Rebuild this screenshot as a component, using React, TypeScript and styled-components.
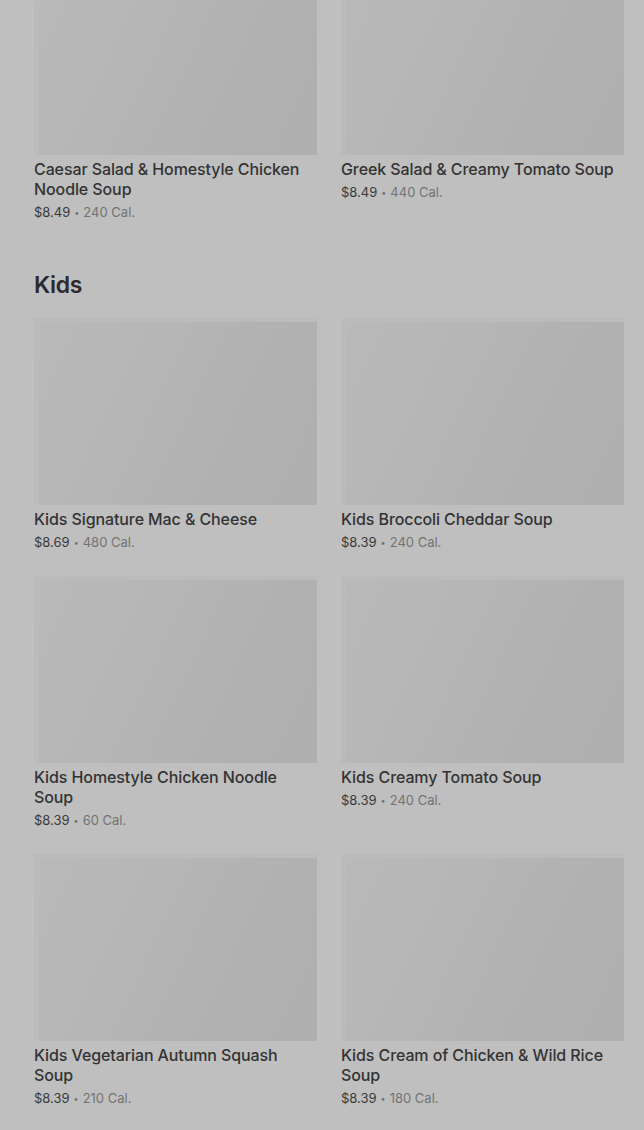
import React from "react";
import { styled, createGlobalStyle } from "styled-components";

type Item = { name: string; price: string; cal: string };

const salads: Item[] = [
  { name: "Caesar Salad & Homestyle Chicken Noodle Soup", price: "$8.49", cal: "240 Cal." },
  { name: "Greek Salad & Creamy Tomato Soup", price: "$8.49", cal: "440 Cal." },
];

const kids: Item[] = [
  { name: "Kids Signature Mac & Cheese", price: "$8.69", cal: "480 Cal." },
  { name: "Kids Broccoli Cheddar Soup", price: "$8.39", cal: "240 Cal." },
  { name: "Kids Homestyle Chicken Noodle Soup", price: "$8.39", cal: "60 Cal." },
  { name: "Kids Creamy Tomato Soup", price: "$8.39", cal: "240 Cal." },
  { name: "Kids Vegetarian Autumn Squash Soup", price: "$8.39", cal: "210 Cal." },
  { name: "Kids Cream of Chicken & Wild Rice Soup", price: "$8.39", cal: "180 Cal." },
];

const GlobalStyle = createGlobalStyle`
  html, body {
    margin: 0;
    background: #bfbfbf;
    overflow: hidden;
  }
  body {
    font-family: Inter, Roboto, "Liberation Sans", Arial, sans-serif;
    color: #2f2f2f;
  }
`;

const Page = styled.main`
  margin-top: -32px;
  padding: 0 20px 40px 34px;
`;

const Section = styled.section`
  & + & {
    margin-top: 47px;
  }
`;

const Heading = styled.h2`
  margin: 0 0 17px;
  font-size: 23px;
  line-height: 32px;
  font-weight: 600;
  color: #2b2b2b;
  letter-spacing: -0.3px;
`;

const Grid = styled.div`
  display: grid;
  grid-template-columns: 1fr 1fr;
  column-gap: 24px;
  row-gap: 24px;
  align-items: start;
`;

const Card = styled.article`
  display: flex;
  flex-direction: column;
`;

/* skeleton image: lighter shimmer edge along top and left */
const Thumb = styled.div`
  height: 187px;
  box-sizing: border-box;
  border-top: 4px solid #bbbbbb;
  border-left: 5px solid #bbbbbb;
  background: linear-gradient(115deg, #b9b9b9 0%, #b6b6b6 35%, #b2b2b2 60%, #afafaf 100%);
`;

const Title = styled.h3`
  margin: 4px 0 3px;
  font-size: 16px;
  line-height: 20px;
  font-weight: 500;
  color: #333333;
  letter-spacing: -0.1px;
`;

const Meta = styled.div`
  display: flex;
  align-items: center;
  height: 20px;
  font-size: 13px;
  line-height: 20px;
  color: #737373;
`;

const Price = styled.span`
  color: #3a3a3a;
`;

const Dot = styled.span`
  margin: 0 4px;
  font-size: 9px;
  line-height: 1;
`;

const MenuCard = ({ item }: { item: Item }) => (
  <Card>
    <Thumb />
    <Title>{item.name}</Title>
    <Meta>
      <Price>{item.price}</Price>
      <Dot>•</Dot>
      <span>{item.cal}</span>
    </Meta>
  </Card>
);

export default function App() {
  return (
    <>
      <GlobalStyle />
      <Page>
        <Section>
          <Grid>
            {salads.map((it) => (
              <MenuCard key={it.name} item={it} />
            ))}
          </Grid>
        </Section>
        <Section>
          <Heading>Kids</Heading>
          <Grid>
            {kids.map((it) => (
              <MenuCard key={it.name} item={it} />
            ))}
          </Grid>
        </Section>
      </Page>
    </>
  );
}
